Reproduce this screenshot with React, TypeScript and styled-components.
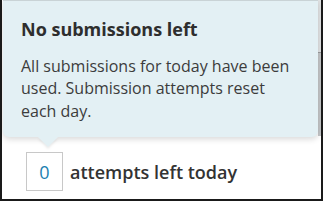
import styled, { createGlobalStyle } from "styled-components";

const GlobalStyle = createGlobalStyle`
  html, body {
    margin: 0;
    padding: 0;
    background: #ffffff;
  }
  body {
    font-family: "Open Sans", "Liberation Sans", sans-serif;
  }
`;

const Frame = styled.div`
  width: 323px;
  height: 201px;
  box-sizing: border-box;
  border: 2px solid #1a1a1a;
  border-top: none;
  display: flex;
  overflow: hidden;
`;

const Content = styled.div`
  flex: 1;
  display: flex;
  flex-direction: column;
  padding-left: 1px;
`;

const Scrollbar = styled.div`
  width: 3px;
  height: 136px;
  display: flex;
  flex-direction: column;
`;

const ScrollTrack = styled.div`
  height: 52px;
  background: #e2e4e5;
`;

const ScrollThumb = styled.div`
  flex: 1;
  background: #c4c6c8;
  border-top: 1px solid #9a9c9e;
`;

const Tooltip = styled.div`
  position: relative;
  flex-shrink: 0;
  background: #e3f0f4;
  border-top: 1px solid #c9d3d6;
  border-radius: 0 0 6px 6px;
  box-shadow: 0 2px 6px rgba(0, 0, 0, 0.16);
  padding: 15px 18px 0 18px;
  height: 137px;
  box-sizing: border-box;

  &::after {
    content: "";
    position: absolute;
    left: 35px;
    bottom: -10px;
    border-left: 10px solid transparent;
    border-right: 10px solid transparent;
    border-top: 10px solid #e3f0f4;
    filter: drop-shadow(0 2px 1px rgba(0, 0, 0, 0.08));
  }
`;

const Title = styled.div`
  font-size: 18px;
  font-weight: 700;
  color: #2e2e2e;
  line-height: 26px;
  margin-bottom: 12.5px;
`;

const Body = styled.div`
  font-size: 16px;
  font-weight: 400;
  color: #3c3c3c;
  line-height: 22.5px;
`;

const Attempts = styled.div`
  display: flex;
  align-items: center;
  gap: 7px;
  margin-top: 15px;
  padding-left: 23px;
`;

const CountBox = styled.div`
  width: 37px;
  height: 39px;
  box-sizing: border-box;
  border: 1px solid #c8c8c8;
  display: flex;
  align-items: center;
  justify-content: center;
  font-size: 18px;
  color: #1d7fb1;
`;

const Label = styled.span`
  font-size: 18px;
  font-weight: 600;
  color: #333333;
`;

export default function App() {
  return (
    <>
      <GlobalStyle />
      <Frame>
        <Content>
          <Tooltip role="tooltip">
            <Title>No submissions left</Title>
            <Body>
              All submissions for today have been used. Submission attempts
              reset each day.
            </Body>
          </Tooltip>
          <Attempts>
            <CountBox>0</CountBox>
            <Label>attempts left today</Label>
          </Attempts>
        </Content>
        <Scrollbar>
          <ScrollTrack />
          <ScrollThumb />
        </Scrollbar>
      </Frame>
    </>
  );
}
